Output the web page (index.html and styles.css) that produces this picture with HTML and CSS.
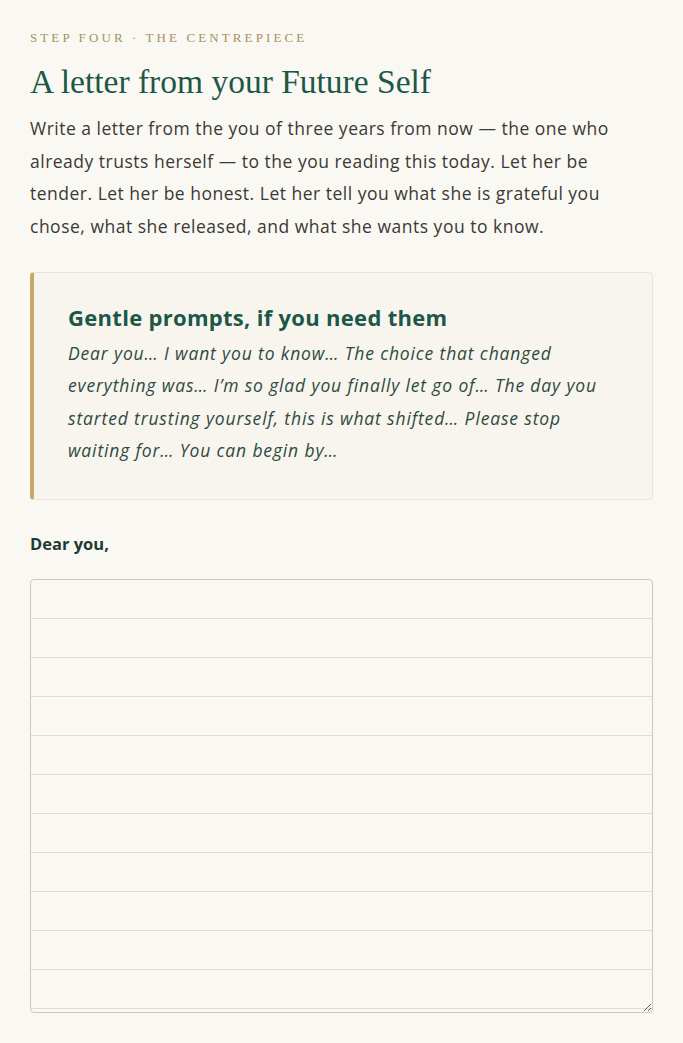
FILE: index.html
```html
<!DOCTYPE html>
<html lang="en">
<head>
    <meta charset="UTF-8">
    <meta name="viewport" content="width=device-width, initial-scale=1.0">
    <title>A letter from your Future Self</title>
    <link rel="stylesheet" href="styles.css">
</head>
<body>
    <div class="page">
        <div class="eyebrow">Step Four · The Centrepiece</div>
        <h1 class="heading">A letter from your Future Self</h1>
        <p class="intro">Write a letter from the you of three years from now — the one who already trusts herself — to the you reading this today. Let her be tender. Let her be honest. Let her tell you what she is grateful you chose, what she released, and what she wants you to know.</p>

        <div class="prompts">
            <div class="prompts-title">Gentle prompts, if you need them</div>
            <p class="prompts-text">Dear you… I want you to know… The choice that changed everything was… I’m so glad you finally let go of… The day you started trusting yourself, this is what shifted… Please stop waiting for… You can begin by…</p>
        </div>

        <label class="letter-label" for="letter">Dear you,</label>
        <textarea class="letter" id="letter" rows="11"></textarea>
    </div>
</body>
</html>
```

FILE: styles.css
```css
body {
    background-color: #faf8f3;
    color: #3a3936;
    font-family: "Open Sans", Lato, sans-serif;
    margin: 0;
}
.page {
    padding: 30px 30px 30px 30px;
}
.eyebrow {
    font-family: "Liberation Serif", serif;
    font-size: 13px;
    letter-spacing: 3.1px;
    text-transform: uppercase;
    color: #a8905e;
    line-height: 16px;
}
.heading {
    font-family: "Liberation Serif", serif;
    font-weight: normal;
    font-size: 33.5px;
    color: #1d5747;
    margin: 16px 0 0;
    line-height: 40px;
}
.intro {
    font-size: 17.5px;
    letter-spacing: 0.5px;
    line-height: 32.5px;
    margin: 10px 0 0;
}
.prompts {
    margin-top: 30px;
    background: #f8f5ee;
    border: 1px solid #ebe5d9;
    border-left: 4px solid #c7a96d;
    border-radius: 4px;
    padding: 29px 40px 32px 34px;
}
.prompts-title {
    font-size: 22px;
    letter-spacing: 0.3px;
    font-weight: bold;
    color: #1d5747;
    line-height: 30px;
}
.prompts-text {
    font-style: italic;
    font-size: 17.5px;
    letter-spacing: 0.85px;
    line-height: 32.4px;
    color: #2e4a42;
    margin: 5px 0 0;
}
.letter-label {
    display: block;
    margin-top: 33px;
    font-size: 16.5px;
    font-weight: bold;
    color: #1f3a33;
    line-height: 22px;
}
.letter {
    display: block;
    box-sizing: border-box;
    width: 100%;
    height: 434px;
    margin-top: 24px;
    padding: 0 12px;
    border: 1px solid #cfc9bd;
    border-radius: 4px;
    background-color: #faf8f3;
    background-image: repeating-linear-gradient(to bottom, transparent 0, transparent 38px, #e2ddd2 38px, #e2ddd2 39px);
    font-family: "Open Sans", sans-serif;
    font-size: 17px;
    line-height: 39px;
    color: #2e3a36;
    resize: vertical;
}
```
